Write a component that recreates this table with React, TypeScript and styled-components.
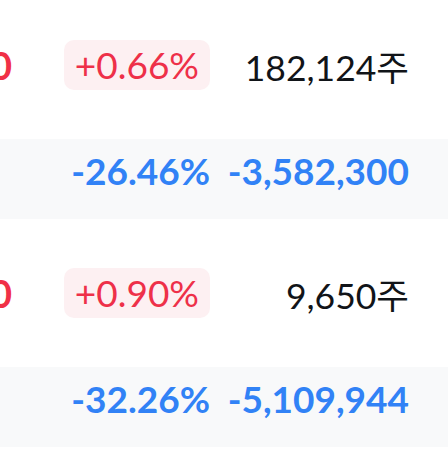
import React from 'react';
import styled, { createGlobalStyle } from 'styled-components';

const GlobalStyle = createGlobalStyle`
  body {
    margin: 0;
    background: #ffffff;
    overflow: hidden;
    font-family: Lato, 'Noto Sans CJK KR', sans-serif;
  }
`;

interface Trade {
  price: string;
  change: string;
  volume: string;
  rate: string;
  amount: string;
}

const trades: Trade[] = [
  { price: '27,350', change: '+0.66%', volume: '182,124주', rate: '-26.46%', amount: '-3,582,300' },
  { price: '11,250', change: '+0.90%', volume: '9,650주', rate: '-32.26%', amount: '-5,109,944' },
];

const App = () => (
  <>
    <GlobalStyle />
    <List>
      {trades.map((t) => (
        <Item key={t.amount}>
          <MainRow>
            <Price>
              <span>{t.price}</span>
            </Price>
            <Cell>
              <Badge>{t.change}</Badge>
            </Cell>
            <Cell>
              <Volume>{t.volume}</Volume>
            </Cell>
          </MainRow>
          <SubRow>
            <span />
            <Cell>
              <Blue>{t.rate}</Blue>
            </Cell>
            <Cell>
              <Blue>{t.amount}</Blue>
            </Cell>
          </SubRow>
        </Item>
      ))}
    </List>
  </>
);

export default App;

const List = styled.div`
  margin-top: -9px;
  width: 448px;
`;

const Item = styled.div`
  display: flex;
  flex-direction: column;
`;

const Row = styled.div`
  display: grid;
  grid-template-columns: 64px 146px 199px;
  padding-right: 39px;
  font-size: 37px;
  white-space: nowrap;
`;

const MainRow = styled(Row)`
  height: 148px;
  align-items: center;
  background: #ffffff;
`;

const SubRow = styled(Row)`
  height: 80px;
  box-sizing: border-box;
  padding-top: 9px;
  align-items: start;
  background: #f8f9fa;
`;

const Cell = styled.div`
  display: flex;
  justify-content: flex-end;
`;

const Price = styled.div`
  display: flex;
  justify-content: flex-end;
  padding-right: 52px;
  color: #f03046;
  font-weight: 700;
  font-size: 38px;
`;

const Badge = styled.span`
  display: inline-block;
  padding: 4px 11px;
  line-height: 42px;
  border-radius: 10px;
  background: #fdf0f2;
  color: #ee3049;
`;

const Volume = styled.span`
  color: #111418;
  font-size: 35.5px;
`;

const Blue = styled.span`
  color: #3182f6;
  font-weight: 700;
`;
